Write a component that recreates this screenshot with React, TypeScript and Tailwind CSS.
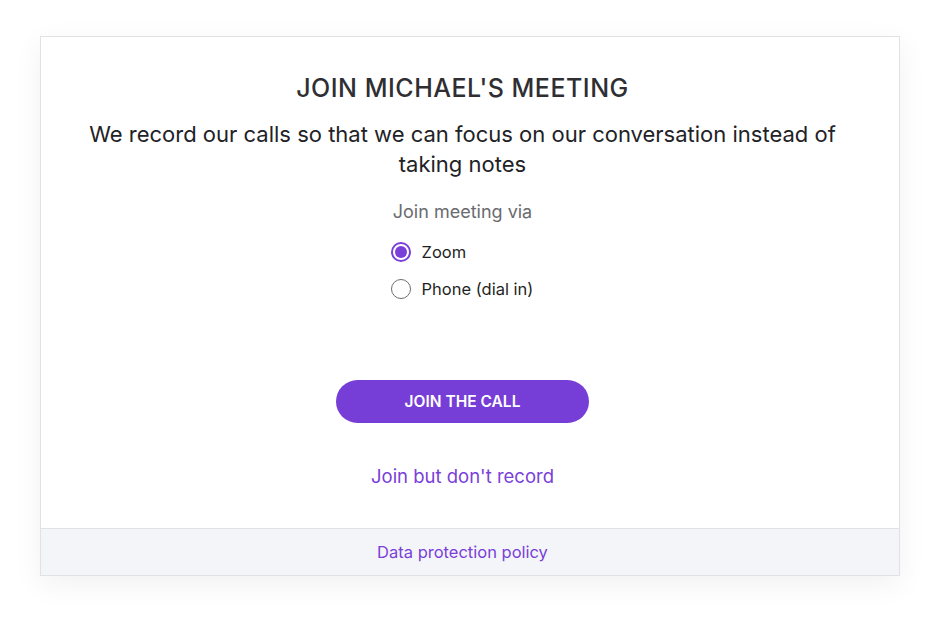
import { useState } from 'react';

const options = [
  { id: 'zoom', label: 'Zoom' },
  { id: 'phone', label: 'Phone (dial in)' },
];

export default function App() {
  const [via, setVia] = useState('zoom');

  return (
    <div className="min-h-[620px] w-[940px] bg-white pt-9 pl-10 font-['Inter',sans-serif]">
      <div className="flex w-[860px] flex-col border border-[#e2e2e4] bg-white shadow-[0_8px_28px_rgba(0,0,0,0.06)]">
        {/* Body */}
        <div className="flex h-[491px] flex-col items-center pt-[35px] pr-[15px]">
          <h1 className="text-[25px] leading-8 font-medium tracking-[0.02em] text-[#2f2f33]">
            JOIN MICHAEL'S MEETING
          </h1>
          <p className="mt-[15px] w-[780px] text-center text-[22px] leading-[30px] text-[#222226]">
            We record our calls so that we can focus on our conversation instead of taking notes
          </p>

          <p className="mt-[21px] text-[18px] leading-6 text-[#6b6b70]">Join meeting via</p>

          <div className="mt-[17px] flex w-[160px] flex-col gap-[15px] pl-[8px]">
            {options.map((o) => (
              <label key={o.id} className="flex h-[22px] cursor-pointer items-center gap-[11px]">
                <span
                  className={
                    via === o.id
                      ? 'flex h-[20px] w-[20px] items-center justify-center rounded-full border-2 border-[#7a3fd8]'
                      : 'flex h-[20px] w-[20px] items-center justify-center rounded-full border border-[#6e6e72]'
                  }
                  onClick={() => setVia(o.id)}
                >
                  {via === o.id && <span className="h-[12px] w-[12px] rounded-full bg-[#7a3fd8]" />}
                </span>
                <span className="text-[16.5px] text-[#1f1f23]">{o.label}</span>
              </label>
            ))}
          </div>

          <button className="mt-[80px] h-[43px] w-[253px] rounded-full bg-[#763ed6] text-[15.5px] font-semibold text-white">
            JOIN THE CALL
          </button>

          <a href="#" className="mt-[41px] text-[18.5px] leading-6 text-[#7a40d8]">
            Join but don't record
          </a>
        </div>

        {/* Footer */}
        <div className="flex h-[47px] items-center justify-center border-t border-[#e2e2e4] bg-[#f4f5f9] pr-[15px]">
          <a href="#" className="text-[16.5px] text-[#7a40d8]">
            Data protection policy
          </a>
        </div>
      </div>
    </div>
  );
}
